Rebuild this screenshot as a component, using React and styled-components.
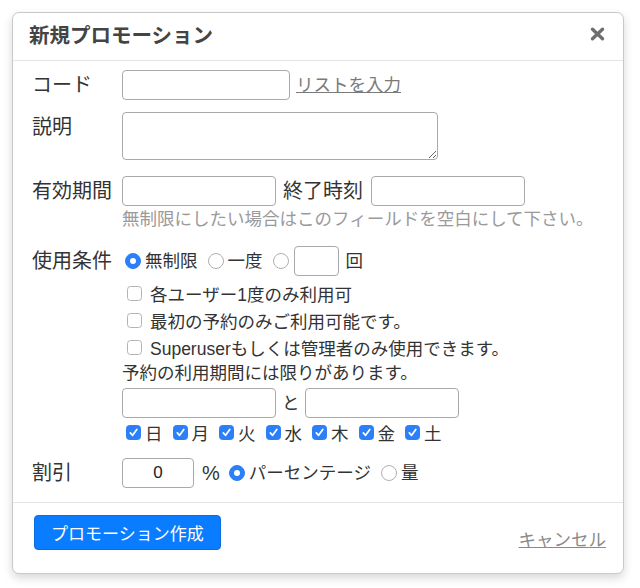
import React from "react";
import styled, { createGlobalStyle } from "styled-components";

const GlobalStyle = createGlobalStyle`
  html, body {
    margin: 0;
    padding: 0;
    background: #ffffff;
  }
  body {
    font-family: "Liberation Sans", "Noto Sans CJK JP", sans-serif;
    color: #333333;
  }
`;

const Page = styled.div`
  padding: 12px 16px 15px 12px;
`;

const Dialog = styled.div`
  width: 612px;
  box-sizing: border-box;
  background: #ffffff;
  border: 1px solid #c9c9c9;
  border-radius: 7px;
  box-shadow: 0 4px 10px rgba(0, 0, 0, 0.16);
`;

const Header = styled.div`
  height: 47px;
  display: flex;
  align-items: center;
  justify-content: space-between;
  padding: 0 18px 0 16px;
  border-bottom: 1px solid #e4e4e4;
`;

const Title = styled.h2`
  margin: 0 0 2px 0;
  font-size: 20.5px;
  line-height: 24px;
  font-weight: 700;
  color: #444444;
`;

const Close = styled.a`
  display: flex;
  margin-bottom: 6px;
  cursor: pointer;
`;

const Body = styled.div`
  padding: 9px 20px 14px 19px;
`;

const Row = styled.div`
  display: flex;
  align-items: flex-start;
  margin-top: ${(p) => p.$gap ?? 0}px;
`;

const Label = styled.div`
  width: 90px;
  flex-shrink: 0;
  font-size: 20px;
  line-height: 30px;
  color: #333333;
`;

const Field = styled.div`
  display: flex;
  flex-direction: column;
  align-items: flex-start;
`;

const Line = styled.div`
  display: flex;
  align-items: center;
  min-height: 30px;
  margin-top: ${(p) => p.$gap ?? 0}px;
`;

const TextInput = styled.input`
  box-sizing: border-box;
  width: ${(p) => p.$w}px;
  height: 30px;
  margin: 0 0 0 ${(p) => p.$ml ?? 0}px;
  padding: 0 6px;
  border: 1px solid #a9a9a9;
  border-radius: 4px;
  background: #ffffff;
  font-family: inherit;
  font-size: 17px;
  color: #222222;
  text-align: ${(p) => (p.$center ? "center" : "left")};
  outline: none;
`;

const TextArea = styled.textarea`
  box-sizing: border-box;
  width: 316px;
  height: 48px;
  margin: 0;
  padding: 4px 6px;
  border: 1px solid #a9a9a9;
  border-radius: 4px;
  font-family: inherit;
  font-size: 17px;
  outline: none;
`;

const TextLink = styled.a`
  margin-left: 6px;
  font-size: 17.5px;
  line-height: 20px;
  color: #7a7a7a;
  text-decoration: underline;
  cursor: pointer;
`;

const Joiner = styled.span`
  font-size: ${(p) => p.$size ?? 17.5}px;
  line-height: 30px;
  margin: 0 ${(p) => p.$mr ?? 8}px 0 ${(p) => p.$ml ?? 7}px;
  color: #333333;
`;

const Hint = styled.div`
  margin-top: 3px;
  font-size: 17.5px;
  line-height: 20px;
  color: #9a9a9a;
`;

const Option = styled.label`
  display: inline-flex;
  align-items: center;
  font-size: 17.5px;
  line-height: 30px;
  color: #333333;
  margin: 0 7px 0 ${(p) => p.$ml ?? 0}px;
`;

const Radio = styled.span`
  position: relative;
  box-sizing: border-box;
  width: 16px;
  height: 16px;
  flex-shrink: 0;
  margin: 0 ${(p) => p.$mr ?? 4}px 0 3px;
  border-radius: 50%;
  background: ${(p) => (p.$on ? "#2b7ff8" : "#ffffff")};
  border: 1px solid ${(p) => (p.$on ? "#2b7ff8" : "#b0b0b0")};

  &::after {
    content: "";
    display: ${(p) => (p.$on ? "block" : "none")};
    position: absolute;
    left: 50%;
    top: 50%;
    width: 6px;
    height: 6px;
    margin: -3px 0 0 -3px;
    border-radius: 50%;
    background: #ffffff;
  }
`;

const Box = styled.span`
  display: inline-flex;
  align-items: center;
  justify-content: center;
  box-sizing: border-box;
  width: 15px;
  height: 15px;
  flex-shrink: 0;
  margin: 0 ${(p) => p.$mr ?? 8}px 0 ${(p) => p.$ml ?? 5}px;
  border-radius: 3.5px;
  background: ${(p) => (p.$on ? "#2b7ff8" : "#ffffff")};
  border: 1px solid ${(p) => (p.$on ? "#2b7ff8" : "#b3b3b3")};
`;

const CheckRow = styled.label`
  display: flex;
  align-items: center;
  height: 27px;
  font-size: 17.5px;
  color: #333333;
`;

const Checks = styled.div`
  margin-top: 4px;
`;

const Note = styled.div`
  font-size: 17.5px;
  line-height: 24px;
  color: #333333;
`;

const Days = styled.div`
  display: flex;
  align-items: center;
  height: 22px;
  margin-top: 3px;
`;

const Day = styled.label`
  display: inline-flex;
  align-items: center;
  font-size: 17.5px;
  color: #333333;
  margin-right: 6px;
`;

const Footer = styled.div`
  display: flex;
  justify-content: space-between;
  align-items: flex-end;
  padding: 12px 17px 23px 21px;
  border-top: 1px solid #e4e4e4;
`;

const PrimaryButton = styled.button`
  height: 35px;
  padding: 0 16px;
  border: 1px solid #0b6ee0;
  border-radius: 4px;
  background: #0a7cff;
  color: #ffffff;
  font-family: inherit;
  font-size: 17px;
  cursor: pointer;
`;

const CancelLink = styled.a`
  font-size: 17.5px;
  line-height: 20px;
  color: #8a8a8a;
  text-decoration: underline;
  cursor: pointer;
`;

const CloseIcon = () => (
  <svg width="15" height="14" viewBox="0 0 15 14">
    <path
      d="M2.5 2.2 L12.5 11.8 M12.5 2.2 L2.5 11.8"
      stroke="#6e6e6e"
      strokeWidth="3.3"
      strokeLinecap="round"
    />
  </svg>
);

const Tick = () => (
  <svg width="11" height="11" viewBox="0 0 11 11">
    <path
      d="M2.3 5.8 L4.6 8.3 L8.8 2.4"
      fill="none"
      stroke="#ffffff"
      strokeWidth="1.7"
      strokeLinecap="round"
      strokeLinejoin="round"
    />
  </svg>
);

const CheckBox = ({ on, ml, mr }) => (
  <Box $on={on} $ml={ml} $mr={mr}>
    {on && <Tick />}
  </Box>
);

const days = ["日", "月", "火", "水", "木", "金", "土"];

const rules = [
  "各ユーザー1度のみ利用可",
  "最初の予約のみご利用可能です。",
  "Superuserもしくは管理者のみ使用できます。",
];

export default function App() {
  return (
    <Page>
      <GlobalStyle />
      <Dialog>
        <Header>
          <Title>新規プロモーション</Title>
          <Close>
            <CloseIcon />
          </Close>
        </Header>

        <Body>
          <Row>
            <Label>コード</Label>
            <Line>
              <TextInput $w={168} />
              <TextLink>リストを入力</TextLink>
            </Line>
          </Row>

          <Row $gap={12}>
            <Label>説明</Label>
            <TextArea />
          </Row>

          <Row $gap={16}>
            <Label>有効期間</Label>
            <Field>
              <Line>
                <TextInput $w={154} />
                <Joiner $size={20}>終了時刻</Joiner>
                <TextInput $w={154} />
              </Line>
              <Hint>無制限にしたい場合はこのフィールドを空白にして下さい。</Hint>
            </Field>
          </Row>

          <Row $gap={17}>
            <Label>使用条件</Label>
            <Field>
              <Line>
                <Option>
                  <Radio $on />
                  無制限
                </Option>
                <Option>
                  <Radio />
                  一度
                </Option>
                <Radio $mr={2} />
                <TextInput $w={45} $ml={3} />
                <Joiner $ml={7}>回</Joiner>
              </Line>
              <Checks>
                {rules.map((r) => (
                  <CheckRow key={r}>
                    <CheckBox />
                    {r}
                  </CheckRow>
                ))}
              </Checks>
              <Note>予約の利用期間には限りがあります。</Note>
              <Line $gap={3}>
                <TextInput $w={154} />
                <Joiner $ml={6} $mr={5}>と</Joiner>
                <TextInput $w={154} />
              </Line>
              <Days>
                {days.map((d) => (
                  <Day key={d}>
                    <CheckBox on ml={4} mr={4} />
                    {d}
                  </Day>
                ))}
              </Days>
            </Field>
          </Row>

          <Row $gap={15}>
            <Label>割引</Label>
            <Line>
              <TextInput $w={72} $center defaultValue="0" />
              <Joiner $size={20} $ml={8} $mr={0}>%</Joiner>
              <Option $ml={6}>
                <Radio $on />
                パーセンテージ
              </Option>
              <Option>
                <Radio />
                量
              </Option>
            </Line>
          </Row>
        </Body>

        <Footer>
          <PrimaryButton>プロモーション作成</PrimaryButton>
          <CancelLink>キャンセル</CancelLink>
        </Footer>
      </Dialog>
    </Page>
  );
}
